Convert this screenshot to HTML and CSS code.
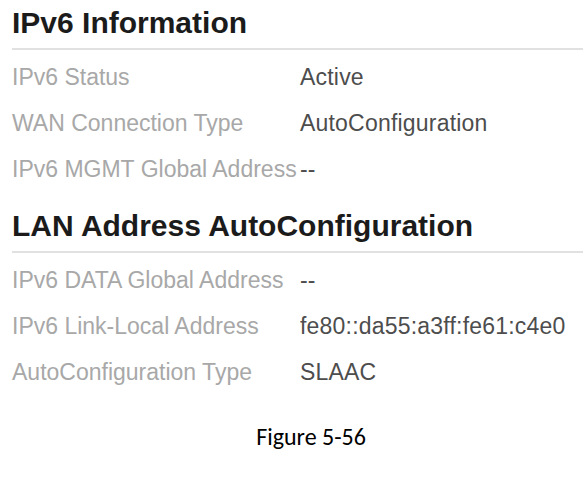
FILE: index.html
```html
<!DOCTYPE html>
<html>
<head>
<meta charset="utf-8">
<link rel="stylesheet" href="styles.css">
</head>
<body>
<div class="page">
  <section class="panel panel-first">
    <h2 class="panel-title">IPv6 Information</h2>
    <div class="rows">
      <div class="label">IPv6 Status</div><div class="value">Active</div>
      <div class="label">WAN Connection Type</div><div class="value">AutoConfiguration</div>
      <div class="label">IPv6 MGMT Global Address</div><div class="value">--</div>
    </div>
  </section>
  <section class="panel">
    <h2 class="panel-title">LAN Address AutoConfiguration</h2>
    <div class="rows">
      <div class="label">IPv6 DATA Global Address</div><div class="value">--</div>
      <div class="label">IPv6 Link-Local Address</div><div class="value">fe80::da55:a3ff:fe61:c4e0</div>
      <div class="label">AutoConfiguration Type</div><div class="value">SLAAC</div>
    </div>
  </section>
  <p class="caption">Figure 5-56</p>
</div>
</body>
</html>
```
FILE: styles.css
```css
html, body {
  margin: 0;
  padding: 0;
  background: #ffffff;
}
.page {
  padding: 5px 0 0 12px;
  font-family: "Liberation Sans", Arial, sans-serif;
}
.panel {
  margin-top: 16px;
}
.panel-first {
  margin-top: 0;
}
.panel-title {
  margin: 0;
  font-size: 30px;
  line-height: 36px;
  font-weight: bold;
  color: #1b1b1b;
  padding-bottom: 7px;
  border-bottom: 2px solid #e1e1e1;
}
.rows {
  display: grid;
  grid-template-columns: 288px 1fr;
  padding-top: 4px;
  font-size: 23px;
  line-height: 46px;
}
.label {
  color: #a8a8a8;
  white-space: nowrap;
}
.value {
  color: #4d4d4d;
  letter-spacing: 0.2px;
  white-space: nowrap;
}
.caption {
  margin: 27px 0 0 0;
  padding-left: 27px;
  text-align: center;
  font-family: Carlito, Lato, "Open Sans", sans-serif;
  font-size: 24px;
  line-height: 30px;
  color: #000000;
}
```
